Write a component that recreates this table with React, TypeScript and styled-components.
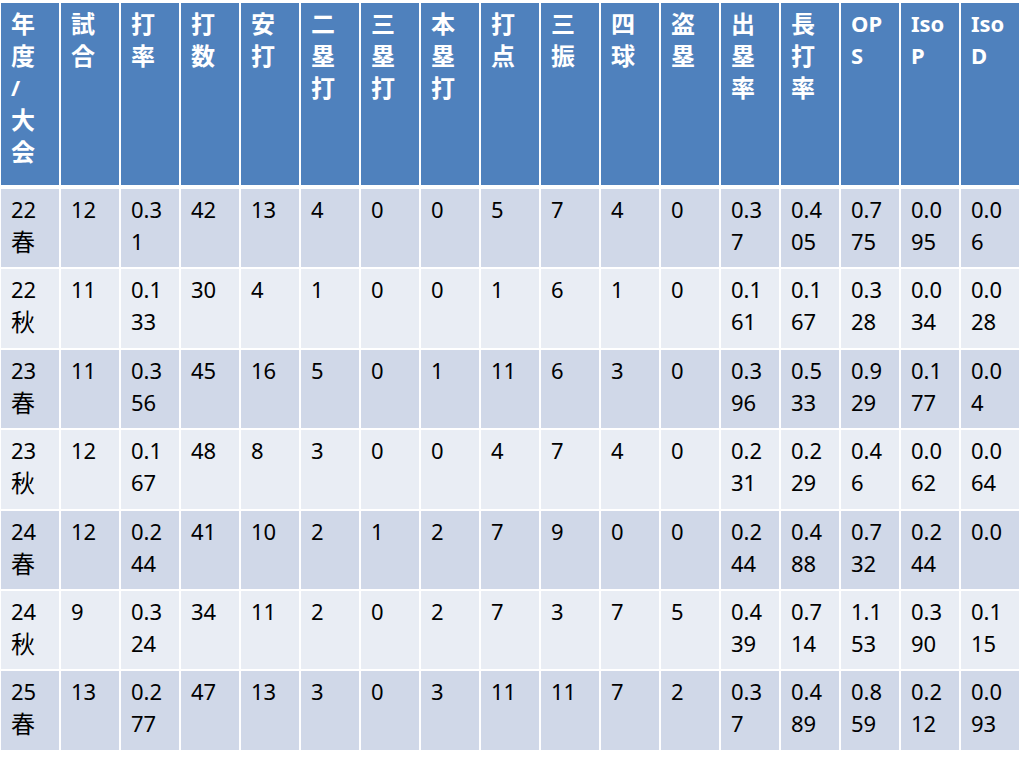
import React from "react";
import styled, { createGlobalStyle } from "styled-components";

const GlobalStyle = createGlobalStyle`
  html, body {
    margin: 0;
    padding: 0;
    background: #ffffff;
  }
  body {
    font-family: "Noto Sans", "Noto Sans CJK JP", sans-serif;
  }
`;

const Page = styled.div`
  padding: 3px 0 0 1px;
`;

const Table = styled.div`
  display: flex;
  flex-direction: column;
  gap: 2px;
  width: 1018px;
`;

const Row = styled.div<{ $header?: boolean }>`
  display: grid;
  grid-template-columns: repeat(17, 58px);
  column-gap: 2px;
  height: ${(p) => (p.$header ? "182px" : "78.4px")};
  margin-bottom: ${(p) => (p.$header ? "2px" : "0")};
`;

const Cell = styled.div<{ $variant: "head" | "odd" | "even" }>`
  box-sizing: border-box;
  padding: 4px 0 0 10px;
  overflow: hidden;
  background: ${(p) =>
    p.$variant === "head" ? "#4f81bd" : p.$variant === "odd" ? "#d0d8e8" : "#e9edf4"};
  color: ${(p) => (p.$variant === "head" ? "#ffffff" : "#000000")};
  font-weight: ${(p) => (p.$variant === "head" ? 700 : 400)};
  display: flex;
  flex-direction: column;
`;

const Line = styled.span<{ $cjk?: boolean }>`
  display: block;
  height: 32px;
  line-height: 32px;
  white-space: nowrap;
  font-size: ${(p) => (p.$cjk ? "24px" : "22px")};
  font-family: ${(p) =>
    p.$cjk ? `"Noto Sans CJK JP", sans-serif` : `"Noto Sans", "Noto Sans CJK JP", sans-serif`};
`;

const isCjk = (s: string) => /[\u3000-\u9fff]/.test(s);

const headers: string[][] = [
  ["年", "度", "/", "大", "会"],
  ["試", "合"],
  ["打", "率"],
  ["打", "数"],
  ["安", "打"],
  ["二", "塁", "打"],
  ["三", "塁", "打"],
  ["本", "塁", "打"],
  ["打", "点"],
  ["三", "振"],
  ["四", "球"],
  ["盗", "塁"],
  ["出", "塁", "率"],
  ["長", "打", "率"],
  ["OP", "S"],
  ["Iso", "P"],
  ["Iso", "D"],
];

const rows: { label: [string, string]; values: string[] }[] = [
  { label: ["22", "春"], values: ["12", "0.31", "42", "13", "4", "0", "0", "5", "7", "4", "0", "0.37", "0.405", "0.775", "0.095", "0.06"] },
  { label: ["22", "秋"], values: ["11", "0.133", "30", "4", "1", "0", "0", "1", "6", "1", "0", "0.161", "0.167", "0.328", "0.034", "0.028"] },
  { label: ["23", "春"], values: ["11", "0.356", "45", "16", "5", "0", "1", "11", "6", "3", "0", "0.396", "0.533", "0.929", "0.177", "0.04"] },
  { label: ["23", "秋"], values: ["12", "0.167", "48", "8", "3", "0", "0", "4", "7", "4", "0", "0.231", "0.229", "0.46", "0.062", "0.064"] },
  { label: ["24", "春"], values: ["12", "0.244", "41", "10", "2", "1", "2", "7", "9", "0", "0", "0.244", "0.488", "0.732", "0.244", "0.0"] },
  { label: ["24", "秋"], values: ["9", "0.324", "34", "11", "2", "0", "2", "7", "3", "7", "5", "0.439", "0.714", "1.153", "0.390", "0.115"] },
  { label: ["25", "春"], values: ["13", "0.277", "47", "13", "3", "0", "3", "11", "11", "7", "2", "0.37", "0.489", "0.859", "0.212", "0.093"] },
];

// wrap a value the way the narrow column does: three characters per line
const wrap = (s: string): string[] => {
  const out: string[] = [];
  for (let i = 0; i < s.length; i += 3) out.push(s.slice(i, i + 3));
  return out;
};

export default function App() {
  return (
    <>
      <GlobalStyle />
      <Page>
        <Table>
          <Row $header>
            {headers.map((lines, i) => (
              <Cell key={i} $variant="head">
                {lines.map((l, j) => (
                  <Line key={j} $cjk={isCjk(l)}>
                    {l}
                  </Line>
                ))}
              </Cell>
            ))}
          </Row>
          {rows.map((r, ri) => {
            const variant = ri % 2 === 0 ? "odd" : "even";
            return (
              <Row key={ri}>
                <Cell $variant={variant}>
                  <Line>{r.label[0]}</Line>
                  <Line $cjk>{r.label[1]}</Line>
                </Cell>
                {r.values.map((v, vi) => (
                  <Cell key={vi} $variant={variant}>
                    {wrap(v).map((l, li) => (
                      <Line key={li}>{l}</Line>
                    ))}
                  </Cell>
                ))}
              </Row>
            );
          })}
        </Table>
      </Page>
    </>
  );
}
